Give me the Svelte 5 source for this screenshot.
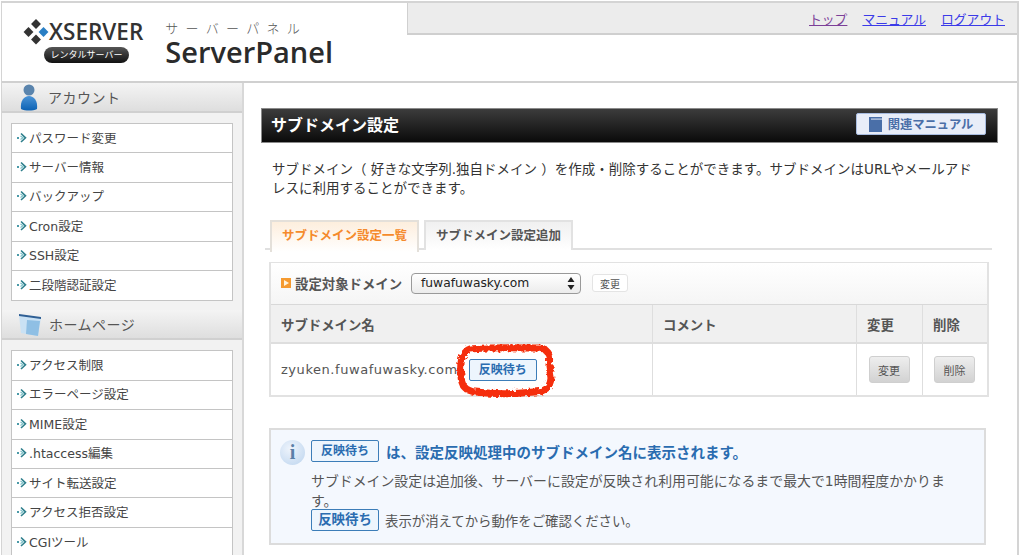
<script>
  const accountMenu = ['パスワード変更', 'サーバー情報', 'バックアップ', 'Cron設定', 'SSH設定', '二段階認証設定'];
  const homepageMenu = ['アクセス制限', 'エラーページ設定', 'MIME設定', '.htaccess編集', 'サイト転送設定', 'アクセス拒否設定', 'CGIツール'];
</script>

{#snippet menu(items)}
  <ul class="menu">
    {#each items as item}
      <li>
        <svg class="bullet" width="11" height="11" viewBox="0 0 11 11">
          <rect x="0" y="5" width="2" height="2" fill="#4a9aa8" />
          <path d="M4 1.5 L8.5 5.8 L4 10" fill="none" stroke="#2e7f8c" stroke-width="1.6" />
          <path d="M3.5 4 L6 5.8 L3.5 7.6" fill="none" stroke="#7cc0c8" stroke-width="1.2" />
        </svg>
        <span>{item}</span>
      </li>
    {/each}
  </ul>
{/snippet}

{#snippet badge()}
  <span class="badge">反映待ち</span>
{/snippet}

<div class="page">
  <header class="header">
    <div class="logo">
      <div class="xserver">
        <div class="xserver-name">
          <svg width="26" height="26" viewBox="0 0 26 26">
            <rect x="9.5" y="1.5" width="7" height="7" transform="rotate(45 13 5)" fill="#333" />
            <rect x="2" y="9.5" width="7" height="7" transform="rotate(45 5.5 13)" fill="#333" />
            <rect x="17" y="9.5" width="7" height="7" transform="rotate(45 20.5 13)" fill="#2a7fc4" />
            <rect x="9.5" y="17" width="7" height="7" transform="rotate(45 13 20.5)" fill="#333" />
          </svg>
          <span>XSERVER</span>
        </div>
        <div class="rental">レンタルサーバー</div>
      </div>
      <div class="panel">
        <div class="panel-kana">サーバーパネル</div>
        <div class="panel-name">ServerPanel</div>
      </div>
    </div>
    <div class="header-side">
      <nav class="topnav">
        <a href="#top" class="visited">トップ</a>
        <a href="#manual">マニュアル</a>
        <a href="#logout">ログアウト</a>
      </nav>
    </div>
  </header>

  <div class="body">
    <aside class="sidebar">
      <h2 class="side-title">
        <svg width="25" height="28" viewBox="-1 0 25 28">
          <defs>
            <linearGradient id="person-body" x1="0" y1="0" x2="0" y2="1">
              <stop offset="0" stop-color="#4a93d6" />
              <stop offset="1" stop-color="#0c62b4" />
            </linearGradient>
          </defs>
          <circle cx="11" cy="7" r="5.5" fill="#5a84ad" />
          <path d="M3 26 C2 18 6 13 11 13 C16 13 20 18 19 26 C15 28 7 28 3 26 Z" fill="url(#person-body)" />
        </svg>
        アカウント
      </h2>
      {@render menu(accountMenu)}
      <h2 class="side-title">
        <svg width="26" height="28" viewBox="0 0 26 28">
          <path d="M2 5 L24 8 L21 26 L4 23 Z" fill="#c9e1f4" />
          <path d="M10 10 L23 11 L21 26 L9 24 Z" fill="#8fbfe4" />
          <path d="M2 4 L24 7 L24 9 L2 6 Z" fill="#2f5f94" />
        </svg>
        ホームページ
      </h2>
      {@render menu(homepageMenu)}
    </aside>

    <main class="main">
      <div class="title-bar">
        <h1>サブドメイン設定</h1>
        <a class="manual-btn" href="#manual">
          <svg width="13" height="15" viewBox="0 0 13 15">
            <rect x="0" y="0" width="13" height="15" fill="#4a6fa8" />
            <rect x="2" y="1.5" width="11" height="1.2" fill="#c9d5ea" />
          </svg>
          関連マニュアル
        </a>
      </div>

      <p class="lead">サブドメイン（ 好きな文字列.独自ドメイン ）を作成・削除することができます。サブドメインはURLやメールアドレスに利用することができます。</p>

      <div class="tabs">
        <div class="tab active">サブドメイン設定一覧</div>
        <div class="tab">サブドメイン設定追加</div>
      </div>

      <div class="table">
        <div class="domain-row">
          <span class="square"></span>
          <span class="domain-label">設定対象ドメイン</span>
          <div class="select">
            <span>fuwafuwasky.com</span>
            <svg width="8" height="13" viewBox="0 0 8 13">
              <path d="M4 0 L7.5 5 L0.5 5 Z M4 13 L0.5 8 L7.5 8 Z" fill="#222" />
            </svg>
          </div>
          <button class="small-btn" type="button">変更</button>
        </div>
        <div class="grid head">
          <div class="cell">サブドメイン名</div>
          <div class="cell">コメント</div>
          <div class="cell">変更</div>
          <div class="cell">削除</div>
        </div>
        <div class="grid row">
          <div class="cell name-cell">
            <span class="name">zyuken.fuwafuwasky.com</span>
            <span class="scribbled">
              {@render badge()}
              <svg class="scribble" width="101" height="55" viewBox="0 0 101 55">
                <defs>
                  <filter id="rough" x="-10%" y="-20%" width="120%" height="140%">
                    <feTurbulence type="fractalNoise" baseFrequency="0.28" numOctaves="2" seed="4" />
                    <feDisplacementMap in="SourceGraphic" scale="5.5" />
                    <feGaussianBlur stdDeviation="0.4" />
                  </filter>
                </defs>
                <path d="M14 5 C34 3 66 4 84 4 C92 5 95 12 93 21 L95 34 C94 45 88 48 78 48 C60 50 36 50 20 48 C9 47 5 41 5 31 C4 21 4 9 14 5 Z" fill="none" stroke="#f52d0a" stroke-width="7" stroke-linejoin="round" filter="url(#rough)" />
              </svg>
            </span>
          </div>
          <div class="cell"></div>
          <div class="cell center"><button class="action-btn" type="button">変更</button></div>
          <div class="cell center"><button class="action-btn" type="button">削除</button></div>
        </div>
      </div>

      <section class="info">
        <div class="info-icon">i</div>
        <div class="info-text">
          <div class="info-head">
            {@render badge()}
            <strong>は、設定反映処理中のサブドメイン名に表示されます。</strong>
          </div>
          <p>サブドメイン設定は追加後、サーバーに設定が反映され利用可能になるまで最大で1時間程度かかります。</p>
          <div class="info-foot">
            {@render badge()}
            <span>表示が消えてから動作をご確認ください。</span>
          </div>
        </div>
      </section>
    </main>
  </div>
</div>

<style>
  :global(body) {
    margin: 0;
    background: #fff;
    overflow: hidden;
  }

  .page {
    box-sizing: border-box;
    width: 1018px;
    height: 554px;
    margin-left: 1px;
    margin-top: 1px;
    border-top: 2px solid #d4d4d4;
    border-left: 1px solid #d4d4d4;
    border-right: 2px solid #d4d4d4;
    font-family: "DejaVu Sans", "Noto Sans CJK JP", sans-serif;
    color: #444;
    overflow: hidden;
  }

  .header {
    display: flex;
    height: 78px;
    border-bottom: 2px solid #d0d0d0;
    box-sizing: content-box;
  }

  .logo {
    width: 405px;
    display: flex;
    padding: 16px 0 0 21px;
    box-sizing: border-box;
    gap: 22px;
  }

  .xserver-name {
    display: flex;
    align-items: center;
    font-family: "Open Sans", "Liberation Sans", sans-serif;
    font-size: 22.5px;
    font-weight: 600;
    color: #333;
    line-height: 26px;
    height: 26px;
  }

  .rental {
    width: 85px;
    height: 16px;
    margin: 2px 0 0 21px;
    border-radius: 8px;
    background: linear-gradient(#555, #111);
    color: #fff;
    font-size: 9px;
    line-height: 16px;
    text-align: center;
    white-space: nowrap;
  }

  .panel {
    margin-top: 3px;
  }

  .panel-kana {
    font-size: 13px;
    font-weight: 300;
    letter-spacing: 7.3px;
    line-height: 14px;
    color: #555;
    white-space: nowrap;
  }

  .panel-name {
    font-family: "Open Sans", "Liberation Sans", sans-serif;
    font-size: 29px;
    font-weight: 600;
    line-height: 30px;
    color: #2b2b2b;
    margin-top: 1px;
  }

  .header-side {
    flex: 1;
  }

  .topnav {
    height: 30px;
    background: #ececec;
    border-left: 1px solid #d0d0d0;
    border-bottom: 2px solid #cfcfcf;
    display: flex;
    justify-content: flex-end;
    align-items: center;
    gap: 15px;
    padding-right: 12px;
    font-size: 12.8px;
  }

  .topnav a {
    color: #3b3be8;
  }

  .topnav a.visited {
    color: #7b3f98;
  }

  .body {
    display: flex;
    height: 472px;
  }

  .sidebar {
    width: 240px;
    flex: none;
    background: #f2f2f2;
    border-right: 2px solid #d8d8d8;
  }

  .side-title {
    box-sizing: border-box;
    margin: 0;
    height: 30px;
    display: flex;
    align-items: center;
    gap: 6px;
    padding-left: 15px;
    background: linear-gradient(#f4f4f4, #dedede);
    border-bottom: 2px solid #d0d0d0;
    font-size: 14px;
    font-weight: 400;
    color: #555;
    letter-spacing: 0.5px;
  }

  .menu {
    list-style: none;
    margin: 10px 0 9px 9px;
    padding: 0;
    width: 222px;
    box-sizing: border-box;
    background: #fff;
    border: 1px solid #c4c4c4;
  }

  .menu li {
    box-sizing: border-box;
    height: 29.4px;
    display: flex;
    align-items: center;
    padding-left: 5px;
    padding-bottom: 2px;
    font-size: 12.5px;
    border-bottom: 1px solid #c4c4c4;
    color: #444;
    white-space: nowrap;
  }

  .menu li:last-child {
    border-bottom: 0;
  }

  .bullet {
    flex: none;
    margin-right: 1px;
  }

  .main {
    flex: 1;
    padding: 25px 0 0 17px;
    min-width: 0;
  }

  .title-bar {
    box-sizing: border-box;
    width: 737px;
    height: 35px;
    display: flex;
    align-items: center;
    justify-content: space-between;
    padding: 0 11px 3px 9px;
    background: linear-gradient(#3c3c3c, #0a0a0a);
    border: 1px solid #8a8a8a;
  }

  h1 {
    margin: 0;
    font-size: 16px;
    font-weight: 700;
    color: #fff;
  }

  .manual-btn {
    box-sizing: border-box;
    width: 130px;
    height: 22px;
    display: flex;
    align-items: center;
    justify-content: center;
    gap: 6px;
    background: #e8edf8;
    border-radius: 2px;
    border: 1px solid #a8bce0;
    color: #4a6fa8;
    font-size: 12.3px;
    font-weight: 700;
    text-decoration: none;
  }

  .lead {
    width: 710px;
    margin: 17px 0 0 11px;
    font-size: 13.5px;
    line-height: 19px;
    color: #333;
  }

  .tabs {
    display: flex;
    gap: 5px;
    margin: 22px 0 0 4px;
    padding-left: 5px;
    width: 727px;
    height: 30px;
    box-sizing: border-box;
    border-bottom: 2px solid #e0e0e0;
  }

  .tab {
    box-sizing: border-box;
    width: 149px;
    height: 30px;
    text-align: center;
    line-height: 27px;
    font-size: 12.5px;
    font-weight: 700;
    color: #555;
    background: linear-gradient(#f0f0f0, #fff);
    border: 2px solid #e2e2e2;
    border-bottom: 0;
    white-space: nowrap;
  }

  .tab.active {
    color: #f58a2c;
    background: linear-gradient(#fdeedd, #fff);
    border-color: #e4e0da;
    height: 32px;
    background-color: #fff;
  }

  .table {
    box-sizing: border-box;
    width: 720px;
    margin: 12px 0 0 8px;
    border: 2px solid #e2e2e2;
    border-top-width: 1px;
  }

  .domain-row {
    box-sizing: border-box;
    height: 42px;
    display: flex;
    align-items: center;
    padding-left: 10px;
    padding-bottom: 1px;
    background: linear-gradient(#fff, #f5f5f5);
    border-bottom: 1px solid #d8d8d8;
  }

  .square {
    width: 10px;
    height: 10px;
    background: #f59a30;
    margin-right: 4px;
    position: relative;
  }

  .square::after {
    content: '';
    position: absolute;
    left: 3px;
    top: 2px;
    border-left: 5px solid #fff3dc;
    border-top: 3px solid transparent;
    border-bottom: 3px solid transparent;
  }

  .domain-label {
    font-size: 13.4px;
    font-weight: 700;
    color: #555;
    width: 116px;
    white-space: nowrap;
  }

  .select {
    box-sizing: border-box;
    width: 170px;
    height: 21px;
    display: flex;
    align-items: center;
    justify-content: space-between;
    padding: 0 5px 0 9px;
    border: 1px solid #9a9a9a;
    border-radius: 4px;
    background: linear-gradient(#fff, #ececec);
    font-size: 12.3px;
    color: #222;
  }

  .small-btn {
    width: 36px;
    height: 18px;
    margin-left: 11px;
    padding: 0;
    font-family: inherit;
    font-size: 10px;
    color: #555;
    background: #fff;
    border: 1px solid #e4e4e4;
    border-radius: 3px;
  }

  .grid {
    display: grid;
    grid-template-columns: 381px 204px 66px 1fr;
  }

  .head {
    box-sizing: border-box;
    height: 39px;
    background: #f0f0f0;
    border-bottom: 2px solid #dedede;
    font-size: 13.4px;
    font-weight: 700;
    color: #555;
  }

  .row {
    height: 51px;
    font-size: 13px;
  }

  .cell {
    display: flex;
    align-items: center;
    padding-left: 10px;
    border-left: 1px solid #dedede;
    white-space: nowrap;
  }

  .cell:first-child {
    border-left: 0;
  }

  .center {
    justify-content: center;
    padding-left: 0;
    padding-right: 1px;
  }

  .name {
    color: #555;
    letter-spacing: 0.55px;
  }

  .name-cell {
    gap: 11px;
  }

  .scribbled {
    position: relative;
    display: inline-flex;
  }

  .scribble {
    position: absolute;
    left: -13px;
    top: -15px;
    pointer-events: none;
  }

  .badge {
    box-sizing: border-box;
    display: inline-block;
    flex: none;
    width: 68px;
    height: 22px;
    line-height: 20px;
    text-align: center;
    font-size: 12px;
    font-weight: 700;
    color: #2a6cb0;
    background: #edf5fd;
    border: 1px solid #3c7db8;
    border-radius: 2px;
  }

  .action-btn {
    width: 41px;
    height: 27px;
    padding: 0;
    font-family: inherit;
    font-size: 11px;
    color: #555;
    background: linear-gradient(#eeeeee, #d2d2d2);
    border: 1px solid #cfcfcf;
    border-radius: 3px;
  }

  .info {
    box-sizing: border-box;
    display: flex;
    width: 717px;
    height: 117px;
    margin: 31px 0 0 8px;
    padding: 10px 0 0 9px;
    background: #f4f8fe;
    border: 2px solid #dcdcdc;
  }

  .info-icon {
    flex: none;
    width: 25px;
    height: 25px;
    margin-right: 6px;
    border-radius: 50%;
    background: radial-gradient(circle at 40% 35%, #eef4fc, #bcd4ee);
    text-align: center;
    font-family: "Liberation Serif", serif;
    font-weight: 700;
    font-size: 20px;
    line-height: 25px;
    color: #5a7fa8;
  }

  .info-text {
    font-size: 13.9px;
    width: 655px;
    color: #555;
  }

  .info-head {
    display: flex;
    align-items: center;
    gap: 7px;
  }

  .info-head strong {
    color: #2a6cb0;
    font-size: 14.5px;
    white-space: nowrap;
  }

  .info-text p {
    margin: 9px 0 0;
    line-height: 20px;
  }

  .info-foot {
    display: flex;
    align-items: center;
    gap: 6px;
    margin-top: -2px;
  }

  .info-foot span {
    font-size: 13.4px;
  }
</style>
